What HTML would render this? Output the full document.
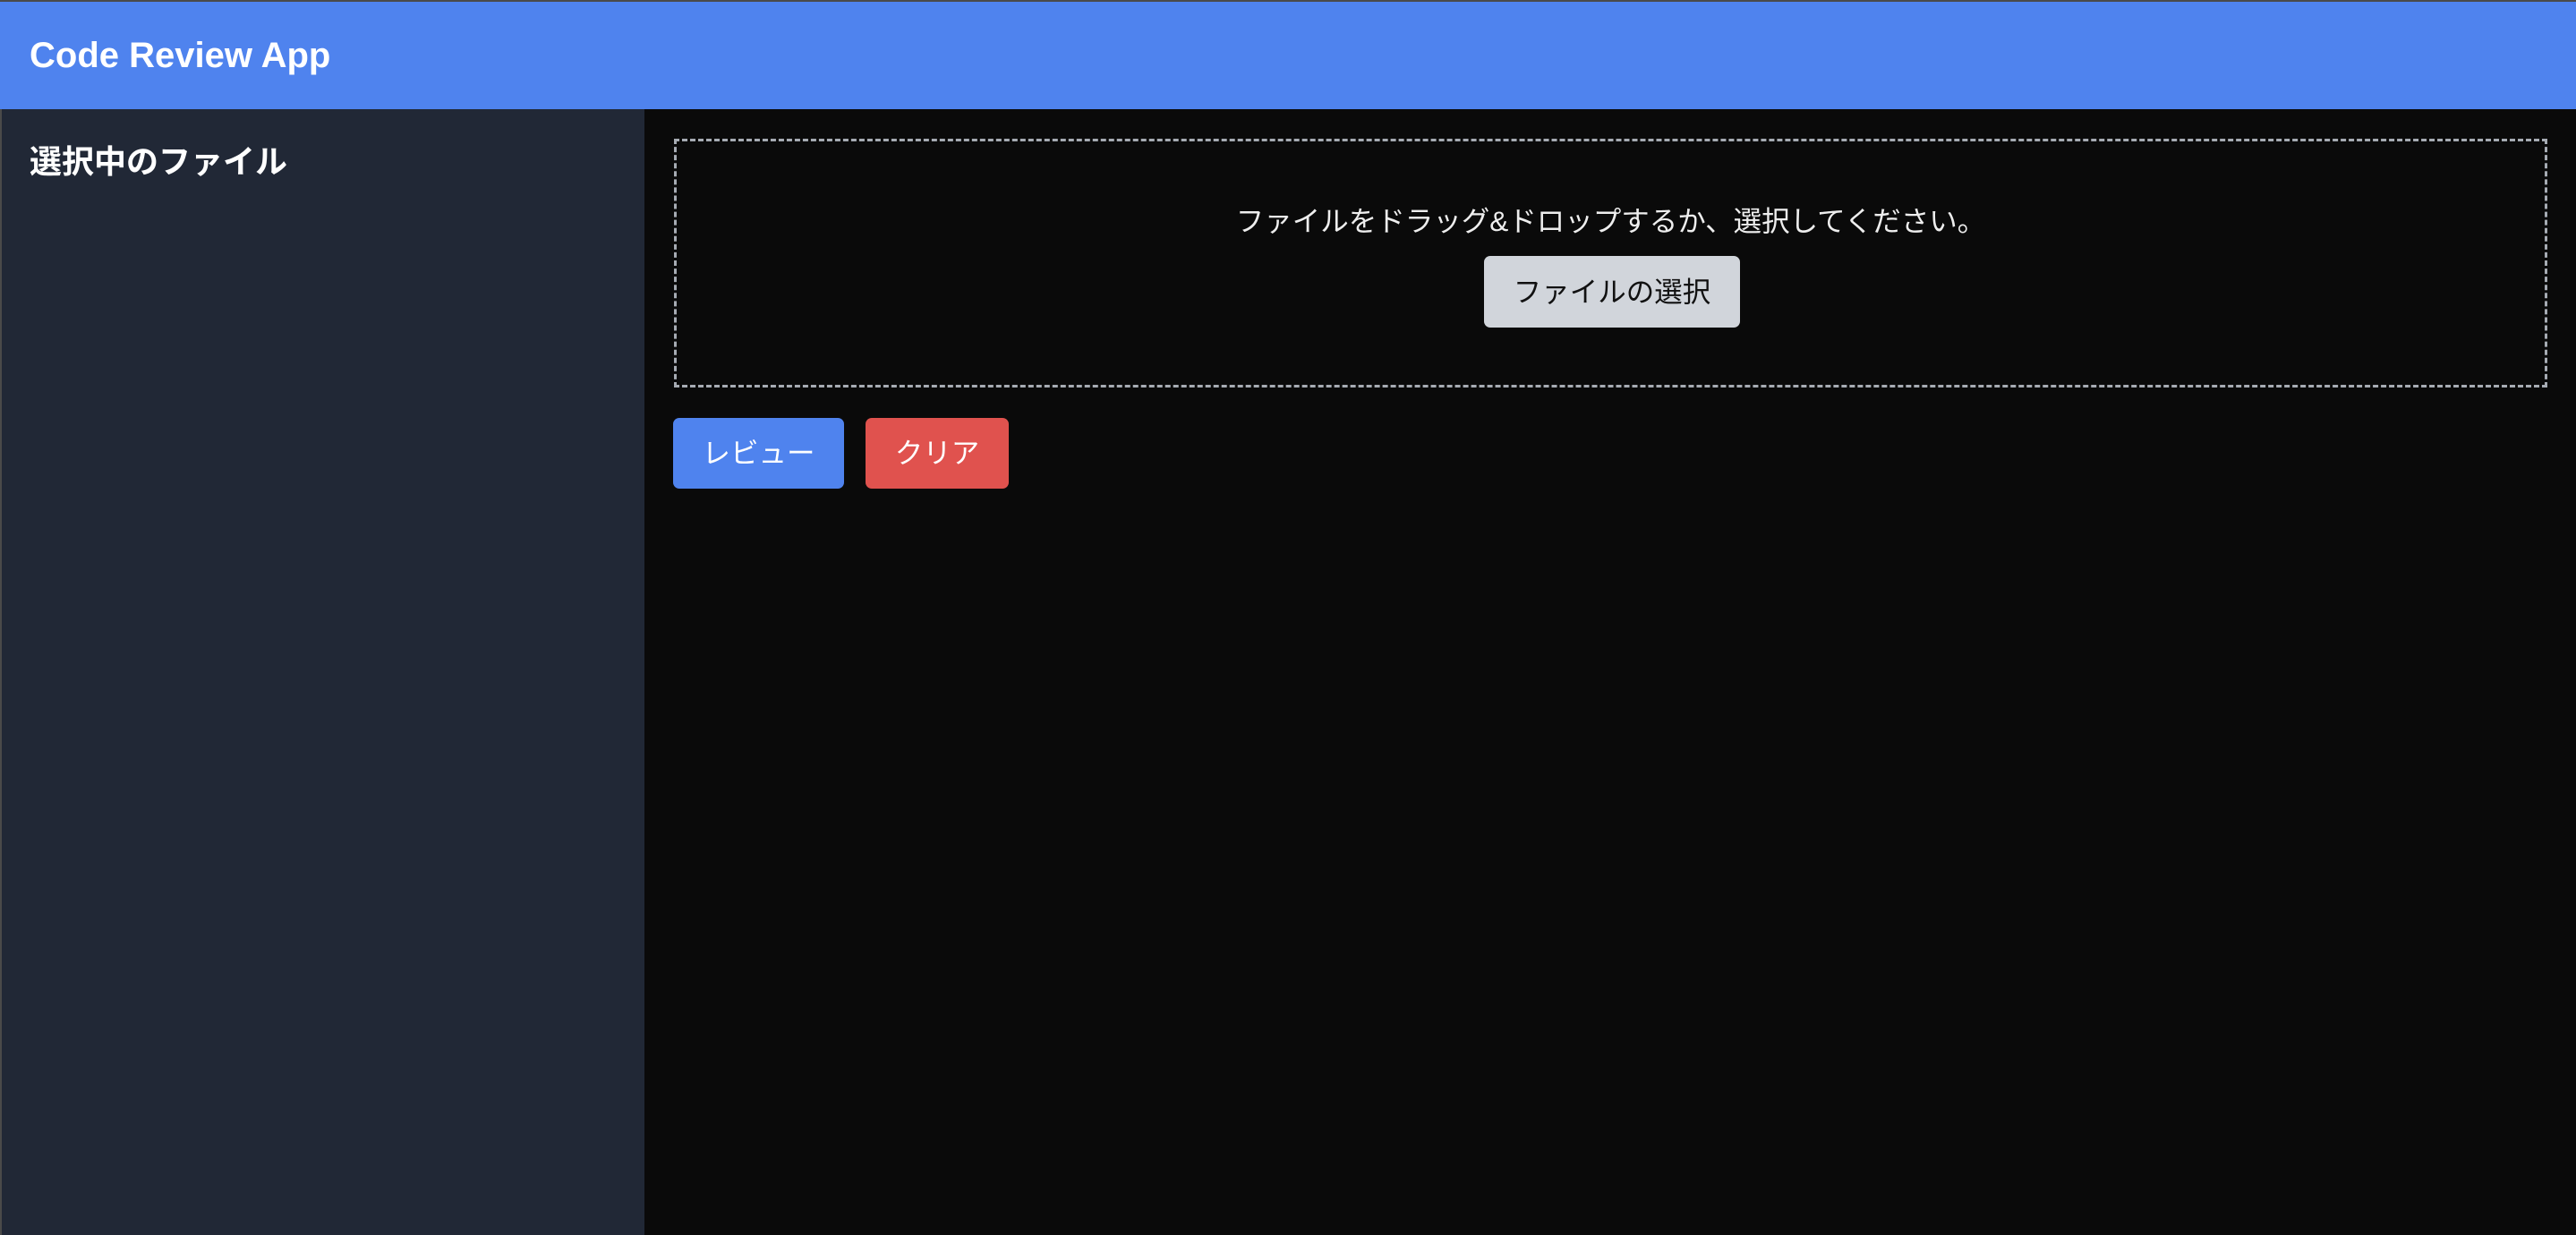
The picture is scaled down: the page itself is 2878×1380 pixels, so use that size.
<!DOCTYPE html>
<html><head><meta charset="utf-8"><style>
*{margin:0;padding:0;box-sizing:border-box}
html,body{width:2878px;height:1380px;overflow:hidden;background:#0a0a0a;font-family:"Liberation Sans","Noto Sans CJK JP",sans-serif}
.hdr{position:absolute;left:0;top:0;width:2878px;height:122px;background:#4f83ee;border-top:2px solid #4a4a4a}
.hdr h1{position:absolute;left:33px;top:37px;color:#fff;font-size:40px;font-weight:bold;line-height:46px}
.side{position:absolute;left:0;top:122px;width:720px;height:1258px;background:#212836;border-left:2px solid #4a4a4a}
.side h2{position:absolute;left:31px;top:36px;color:#fff;font-size:36px;font-weight:bold;line-height:46px}
.drop{position:absolute;left:753px;top:155px;width:2093px;height:278px;border:3px dashed #a6abb3;text-align:center}
.drop p{position:absolute;left:0;right:0;top:67px;color:#eee;font-size:31.5px;line-height:44px}
.sel{position:absolute;left:902px;top:128px;width:286px;height:80px;background:#d1d5db;border-radius:7px;color:#111;font-size:31.5px;line-height:80px;text-align:center}
.btn{position:absolute;top:467px;height:79px;border-radius:7px;color:#fff;font-size:31.5px;line-height:79px;text-align:center}
</style></head><body>
<div class="hdr"><h1>Code Review App</h1></div>
<div class="side"><h2>選択中のファイル</h2></div>
<div class="drop"><p>ファイルをドラッグ&amp;ドロップするか、選択してください。</p><div class="sel">ファイルの選択</div></div>
<div class="btn" style="left:752px;width:191px;background:#4f83ee">レビュー</div>
<div class="btn" style="left:967px;width:160px;background:#e0524e">クリア</div>
</body></html>
